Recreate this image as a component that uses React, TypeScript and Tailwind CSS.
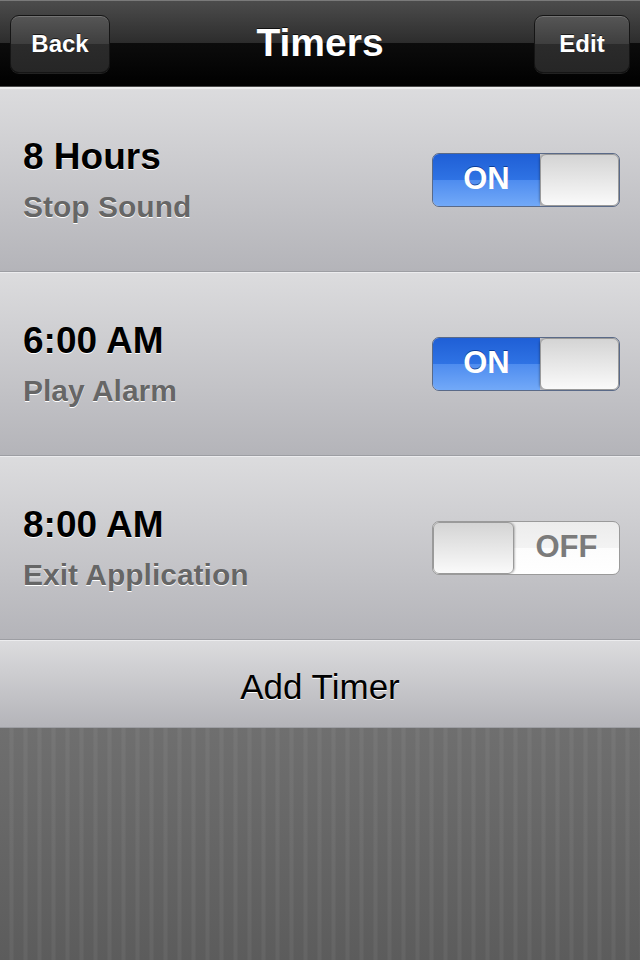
import React from "react";

const timers = [
  { id: "t1", time: "8 Hours", action: "Stop Sound", on: true },
  { id: "t2", time: "6:00 AM", action: "Play Alarm", on: true },
  { id: "t3", time: "8:00 AM", action: "Exit Application", on: false },
];

function NavButton({ label, className }: { label: string; className: string }) {
  return (
    <button
      className={`h-[58px] rounded-[9px] border border-[#151515] bg-[linear-gradient(#565656_0%,#3e3e3e_50%,#2b2b2b_50%,#262626_100%)] shadow-[inset_0_1px_0_rgba(255,255,255,0.18),0_1px_0_rgba(255,255,255,0.12)] text-white text-[24px] font-bold [text-shadow:0_-1px_0_rgba(0,0,0,0.6)] ${className}`}
    >
      {label}
    </button>
  );
}

function Toggle({ on }: { on: boolean }) {
  if (on) {
    return (
      <div className="w-[188px] h-[54px] rounded-[7px] border border-[#5a6a88] overflow-hidden flex shrink-0">
        <div className="w-[107px] h-full flex items-center justify-center bg-[linear-gradient(#1f5fd6_0%,#2f73e4_50%,#4e8cef_50%,#72a9f8_100%)]">
          <span className="text-white text-[31px] font-bold [text-shadow:0_-1px_0_rgba(0,40,120,0.7)]">ON</span>
        </div>
        <div className="flex-1 h-full rounded-[6px] border border-[#9a9a9a] bg-[linear-gradient(#d4d4d4,#fafafa)] shadow-[-1px_0_2px_rgba(0,0,0,0.25)]" />
      </div>
    );
  }
  return (
    <div className="w-[188px] h-[54px] rounded-[7px] border border-[#9a9a9a] overflow-hidden flex shrink-0 bg-[linear-gradient(#ececec_0%,#f3f3f3_50%,#fcfcfc_50%,#ffffff_100%)]">
      <div className="w-[81px] h-full rounded-[6px] border border-[#9a9a9a] bg-[linear-gradient(#d4d4d4,#fafafa)] shadow-[1px_0_2px_rgba(0,0,0,0.25)]" />
      <div className="flex-1 h-full flex items-center justify-center">
        <span className="text-[#7b7b7b] text-[31px] font-bold">OFF</span>
      </div>
    </div>
  );
}

export default function App() {
  return (
    <div className="h-screen flex flex-col font-['Liberation_Sans',Arial,sans-serif]">
      {/* Nav bar */}
      <div className="h-[86px] shrink-0 grid grid-cols-[1fr_auto_1fr] items-center px-[10px] border-t border-[#7a7a7a] bg-[linear-gradient(#4c4c4c_0%,#2c2c2c_50%,#0c0c0c_50%,#000000_100%)]">
        <div className="flex justify-start">
          <NavButton label="Back" className="w-[100px]" />
        </div>
        <h1 className="text-white text-[39px] font-bold [text-shadow:0_-1px_0_rgba(0,0,0,0.7)]">Timers</h1>
        <div className="flex justify-end">
          <NavButton label="Edit" className="w-[96px]" />
        </div>
      </div>
      <div className="h-px bg-[#4a4a4a]" />
      <div className="h-px bg-[#eeeeee]" />

      {/* Timer rows */}
      {timers.map((t) => (
        <div
          key={t.id}
          className="h-[184px] shrink-0 flex items-center justify-between pl-[23px] pr-[20px] border-b border-[#9d9ea3] bg-[linear-gradient(#dcdcde,#b4b4b9)] shadow-[inset_0_1px_0_#ececee]"
        >
          <div className="flex flex-col">
            <p className="text-[37px] leading-[44px] font-bold text-black [text-shadow:0_1px_0_#fff]">{t.time}</p>
            <p className="mt-[10px] text-[30px] leading-[36px] font-bold text-[#666666] [text-shadow:0_1px_0_#fff]">{t.action}</p>
          </div>
          <Toggle on={t.on} />
        </div>
      ))}

      {/* Add Timer */}
      <button className="h-[88px] shrink-0 flex items-center justify-center pt-[7px] border-b border-[#9d9ea3] bg-[linear-gradient(#dcdcde,#b4b4b9)] shadow-[inset_0_1px_0_#ececee]">
        <span className="text-[35px] text-black [text-shadow:0_1px_0_#fff]">Add Timer</span>
      </button>

      {/* Pinstripe background */}
      <div className="flex-1 bg-[repeating-linear-gradient(90deg,rgba(255,255,255,0)_0px,rgba(255,255,255,0)_9px,rgba(255,255,255,0.05)_10px,rgba(255,255,255,0.05)_13px,rgba(255,255,255,0)_14px),linear-gradient(#6f6f6f,#5c5c5c)]" />
    </div>
  );
}
